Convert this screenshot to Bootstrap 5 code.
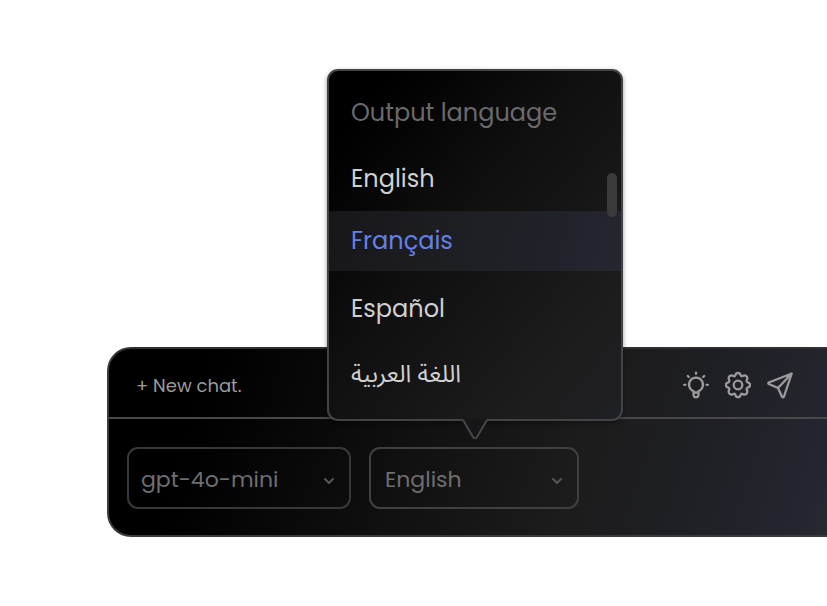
<!DOCTYPE html>
<html lang="en">
<head>
<meta charset="utf-8">
<meta name="viewport" content="width=device-width, initial-scale=1">
<title>Chat</title>
<link href="https://cdn.jsdelivr.net/npm/bootstrap@5.3.0/dist/css/bootstrap.min.css" rel="stylesheet">
<style>
  body { font-family: Poppins, Inter, "Liberation Sans", sans-serif; background: #fff; }
  .page { padding: 0 0 69px 107px; }
  .composer {
    border: 2px solid #3a3a3d; border-right: 0; border-top-color: #303034;
    border-radius: 24px 0 0 24px;
    background: linear-gradient(108deg, #000 14%, #101011 42%, #1c1c1c 65%, #1e1f23 78%, #252530 96%, #292932);
  }
  .composer-bar { height: 70px; padding: 4px 34px 0 27px; border-bottom: 2px solid #48484b; }
  .new-chat { color: #9b9b9b; font-size: 18px; }
  .tool { color: #9b9b9b; line-height: 0; }
  .composer-fields { padding: 28px 18px 26px; gap: 18px; }
  .model-field { width: 224px; }
  .lang-field { width: 210px; }
  .field {
    height: 62px; padding: 2px 44px 0 12px; font-size: 22px; color: #6e6e70;
    background: transparent; border: 2px solid #38383b; border-radius: 11px; appearance: none;
  }
  .lang-field .field { border-color: #404043; padding-left: 14px; }
  .chevron { right: 16px; top: 28px; color: #55555a; pointer-events: none; }
  .lang-menu {
    left: -42px; bottom: calc(100% + 26px); width: 296px; padding: 9px 0 11px;
    border: 2px solid #434346; border-radius: 11px;
    background: linear-gradient(130deg, #000 12%, #0f0f10 42%, #161617 62%, #1d1d1d 82%, #1f2025);
    box-shadow: 0 2px 5px rgba(0, 0, 0, .4);
  }
  .menu-title, .option { height: 66px; padding: 0 22px; font-size: 24px; line-height: 66px; }
  .menu-title { color: #6a6a6c; }
  .option { color: #d0d0d0; }
  .option.chosen {
    height: 60px; line-height: 60px; margin: -1px 0 5px; color: #6580e8;
    background: linear-gradient(105deg, #17171a, #1e1f23 45%, #20222a 75%, #262631);
  }
  .arabic { font-family: "Noto Sans Arabic", "DejaVu Sans", sans-serif; }
  .scroll-thumb { right: 4px; top: 102px; width: 10px; height: 44px; border-radius: 5px; background: #3b3b3b; }
  .menu-tail { left: 132px; top: 100%; }
</style>
<script src="https://cdn.jsdelivr.net/npm/bootstrap@5.3.0/dist/js/bootstrap.bundle.min.js"></script>
</head>
<body>
<main class="page min-vh-100 d-flex flex-column justify-content-end">
  <form class="composer">
    <div class="composer-bar d-flex align-items-center justify-content-between">
      <button type="button" class="new-chat btn border-0 p-0">+ New chat.</button>
      <div class="d-flex align-items-center gap-3">
        <button type="button" class="tool btn border-0 p-0" aria-label="Ideas">
          <svg width="26" height="28" viewBox="0 0 26 28" fill="none" stroke="currentColor" stroke-width="2.3" stroke-linecap="round" stroke-linejoin="round"><path d="M10.5 21.500v-1.400A7 7 0 1 1 15.500 20.100v1.400M10.500 21.500h5v2.300a2.500 2.500 0 0 1-5 0zM13 1.600v1.200M4.800 5l.900.900M21.200 5l-.9.900M1.200 13.800h1.200M23.600 13.800h1.200"/></svg>
        </button>
        <button type="button" class="tool btn border-0 p-0" aria-label="Settings">
          <svg width="26" height="28" viewBox="0 0 26 28" fill="none" stroke="currentColor" stroke-width="2.300" stroke-linejoin="round"><circle cx="13" cy="14" r="4.300"/><path d="M10.400 4.300C11 1 15 1 15.600 4.300Q16.200 5.600 17.600 5C20.400 3.200 23.300 6 21.900 8.900Q21.200 10.500 22.500 11.300C26 12 26 16 22.500 16.700Q21.200 17.500 21.900 19.100C23.300 22 20.400 24.800 17.600 23Q16.200 22.400 15.600 23.700C15 27 11 27 10.400 23.700Q9.800 22.400 8.400 23C5.600 24.800 2.700 22 4.100 19.100Q4.800 17.500 3.500 16.700C0 16 0 12 3.500 11.300Q4.800 10.500 4.100 8.900C2.700 6 5.600 3.200 8.400 5Q9.800 5.600 10.400 4.300Z"/></svg>
        </button>
        <button type="button" class="tool btn border-0 p-0" aria-label="Send">
          <svg width="26" height="28" viewBox="0 0 26 28" fill="none" stroke="currentColor" stroke-width="2.300" stroke-linejoin="round" stroke-linecap="round"><path d="M24.700 2.500 1.800 11.500Q.8 12.300 1.900 13L11 17 15 25.800Q16.200 27 17 25.500ZM24.700 2.500 11 17"/></svg>
        </button>
      </div>
    </div>
    <div class="composer-fields d-flex">
      <div class="model-field position-relative">
        <select class="field w-100" aria-label="Model"><option>gpt-4o-mini</option></select>
        <svg class="chevron position-absolute" width="12" height="12" viewBox="0 0 12 12" fill="none" stroke="currentColor" stroke-width="2" stroke-linecap="round" stroke-linejoin="round"><path d="m2 4 4 4 4-4"/></svg>
      </div>
      <div class="lang-field position-relative">
        <select class="field w-100" aria-label="Output language"><option>English</option></select>
        <svg class="chevron position-absolute" width="12" height="12" viewBox="0 0 12 12" fill="none" stroke="currentColor" stroke-width="2" stroke-linecap="round" stroke-linejoin="round"><path d="m2 4 4 4 4-4"/></svg>
        <div class="lang-menu position-absolute d-flex flex-column">
          <div class="menu-title">Output language</div>
          <button type="button" class="option btn border-0 rounded-0 text-start">English</button>
          <button type="button" class="option chosen btn border-0 rounded-0 text-start">Français</button>
          <button type="button" class="option btn border-0 rounded-0 text-start">Español</button>
          <button type="button" class="option arabic btn border-0 rounded-0 text-start" lang="ar">اللغة العربية</button>
          <div class="scroll-thumb position-absolute"></div>
          <svg class="menu-tail position-absolute" width="28" height="22" viewBox="0 0 28 22"><path d="M2-2v3L12 18.500q2 2.500 4 0L26 1v-3z" fill="#161618"/><path d="M2 1 12 18q2 2.500 4 0L26 1" fill="none" stroke="#48484b" stroke-width="2"/></svg>
        </div>
      </div>
    </div>
  </form>
</main>
</body>
</html>
